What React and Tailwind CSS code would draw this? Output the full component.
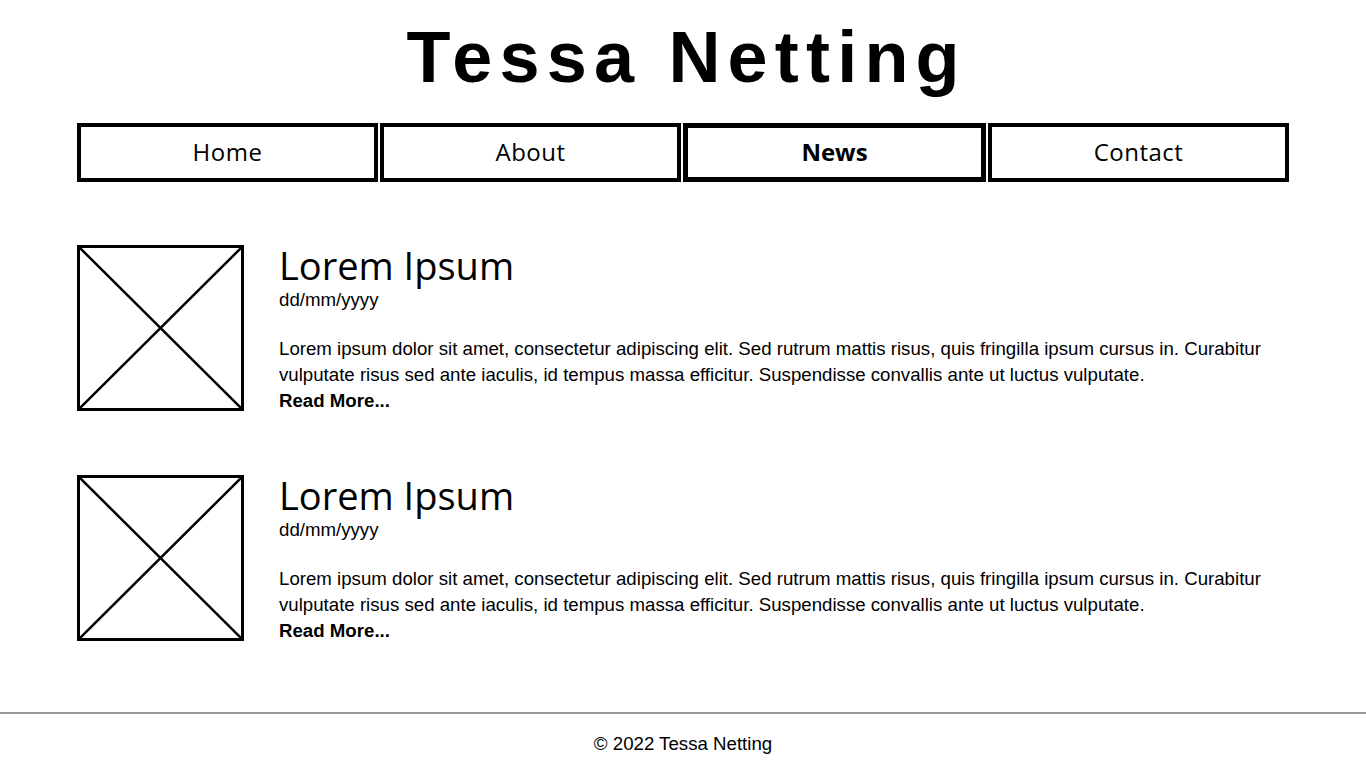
import React from "react";

const navItems = ["Home", "About", "News", "Contact"];

const posts = [
    {
        title: "Lorem Ipsum",
        date: "dd/mm/yyyy",
        body: "Lorem ipsum dolor sit amet, consectetur adipiscing elit. Sed rutrum mattis risus, quis fringilla ipsum cursus in. Curabitur vulputate risus sed ante iaculis, id tempus massa efficitur. Suspendisse convallis ante ut luctus vulputate.",
    },
    {
        title: "Lorem Ipsum",
        date: "dd/mm/yyyy",
        body: "Lorem ipsum dolor sit amet, consectetur adipiscing elit. Sed rutrum mattis risus, quis fringilla ipsum cursus in. Curabitur vulputate risus sed ante iaculis, id tempus massa efficitur. Suspendisse convallis ante ut luctus vulputate.",
    },
];

function Placeholder() {
    return (
        <div className="w-[167px] h-[166px] shrink-0 border-[3px] border-black">
            <svg viewBox="0 0 100 100" preserveAspectRatio="none" className="w-full h-full block">
                <line x1="0" y1="0" x2="100" y2="100" stroke="black" strokeWidth="2.5" vectorEffect="non-scaling-stroke" />
                <line x1="100" y1="0" x2="0" y2="100" stroke="black" strokeWidth="2.5" vectorEffect="non-scaling-stroke" />
            </svg>
        </div>
    );
}

export default function App() {
    return (
        <div className="min-h-[768px] flex flex-col bg-white text-black font-['Liberation_Sans',Arial,sans-serif]">
            <header className="pt-[21px]">
                <h1 className="text-center text-[72px] leading-none font-bold tracking-[0.1em] pl-[0.1em]">
                    Tessa Netting
                </h1>
            </header>

            <nav className="mt-[30px] px-[77px]">
                <ul className="flex gap-[2px] font-['Open_Sans',sans-serif] text-[24px] tracking-[0.5px]">
                    {navItems.map((item) => (
                        <li
                            key={item}
                            className={
                                item === "News"
                                    ? "flex-1 h-[59px] pb-[2px] flex items-center justify-center border-[5px] border-black font-bold tracking-normal"
                                    : "flex-1 h-[59px] pb-[2px] flex items-center justify-center border-4 border-black"
                            }
                        >
                            {item}
                        </li>
                    ))}
                </ul>
            </nav>

            <main className="flex-1 px-[77px] pt-[63px] pb-[68px] flex flex-col gap-[61px]">
                {posts.map((post, i) => (
                    <article key={i} className="flex gap-[35px]">
                        <Placeholder />
                        <div className="flex-1">
                            <h2 className="font-['Open_Sans',sans-serif] text-[38px] leading-[38px] pt-[1px]">
                                {post.title}
                            </h2>
                            <p className="text-[18.67px] leading-[26px] mt-[3px]">{post.date}</p>
                            <p className="text-[18.67px] leading-[26px] mt-[23px]">
                                {post.body}
                                <br />
                                <span className="font-bold">Read More...</span>
                            </p>
                        </div>
                    </article>
                ))}
            </main>

            <footer className="border-t-2 border-[#9a9a9a] pt-[17px] pb-[12px] text-center text-[18.67px] leading-[26px]">
                © 2022 Tessa Netting
            </footer>
        </div>
    );
}
